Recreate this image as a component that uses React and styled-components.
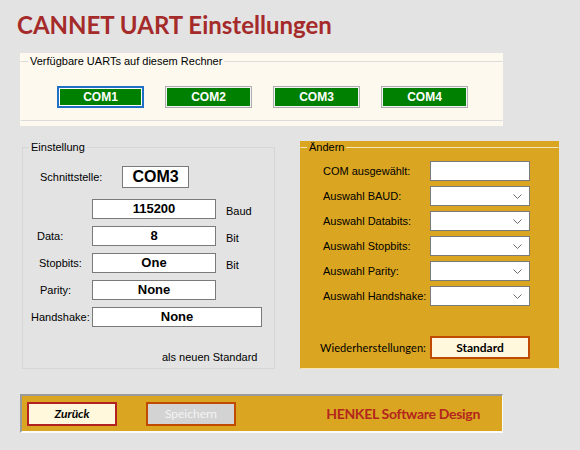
import React from 'react'
import styled, { createGlobalStyle, css } from 'styled-components'

const GlobalStyle = createGlobalStyle`
  html, body {
    margin: 0;
    padding: 0;
    background: #e3e3e3;
  }
  body {
    width: 580px;
    height: 450px;
    overflow: hidden;
    font-family: "Liberation Sans", Arial, sans-serif;
    font-size: 11px;
    color: #000;
  }
`

const Page = styled.div`
  padding: 0 0 0 20px;
  width: 560px;
`

const Title = styled.h1`
  margin: 0 0 0 -3px;
  height: 53px;
  line-height: 50px;
  font-family: Lato, "Open Sans", sans-serif;
  font-size: 24px;
  font-weight: 700;
  color: #a52a2a;
`

/* cream strip with the list of found ports */
const PortPanel = styled.div`
  width: 483px;
  height: 73px;
  padding-top: 2px;
  box-sizing: border-box;
  background: #fdf9ef;
`

const Group = styled.fieldset`
  margin: 0;
  padding: 0;
  min-width: 0;
  border: 1px solid ${p => p.$line || '#d9d9d9'};
  ${p => p.$noSides && css`
    border-left-color: transparent;
    border-right-color: transparent;
  `}
`

const Legend = styled.legend`
  margin-left: ${p => p.$offset || 8}px;
  padding: 0 2px;
  font-size: 11px;
  line-height: 13px;
`

const PortRow = styled.div`
  display: flex;
  gap: 21px;
  padding: 18px 0 0 36px;
  height: 52px;
  box-sizing: border-box;
`

const PortButton = styled.button`
  width: 87px;
  height: 22px;
  padding: 0;
  background: #008000;
  color: #fff;
  font-family: "Liberation Sans", Arial, sans-serif;
  font-size: 12px;
  font-weight: 700;
  border: 1px solid #adadad;
  box-shadow: inset 0 0 0 1px #f2f2f2;
  ${p => p.$focused && css`
    border: 2px solid #1f6fc5;
    box-shadow: inset 0 0 0 1px #fff;
  `}
`

const Middle = styled.div`
  display: flex;
  margin-top: 15px;
  height: 228px;
`

const LeftGroup = styled(Group)`
  margin-left: 2px;
  width: 253px;
  box-sizing: border-box;
  border-color: #d6d6d6;
`

const Rows = styled.div`
  display: flex;
  flex-direction: column;
  gap: 7px;
  margin-top: ${p => p.$top || 0}px;
`

const Row = styled.div`
  display: flex;
  align-items: center;
  height: ${p => p.$h || 20}px;
  margin-top: ${p => p.$top || 0}px;
`

const Label = styled.span`
  box-sizing: border-box;
  width: ${p => p.$w || 69}px;
  padding-left: ${p => p.$indent || 0}px;
  white-space: nowrap;
`

const ValueBox = styled.div`
  box-sizing: border-box;
  width: ${p => p.$w || 124}px;
  height: ${p => p.$h || 20}px;
  background: #fff;
  border: 1px solid #7a7a7a;
  text-align: center;
  font-weight: 700;
  font-size: ${p => p.$size || 13}px;
  line-height: ${p => (p.$h || 20) - 3}px;
`

const Unit = styled.span`
  margin-left: 10px;
  padding-top: 4px;
`

const Note = styled.div`
  margin: 24px 0 0 139px;
`

/* gold panel for changing the settings */
const EditPanel = styled.div`
  margin-left: 25px;
  width: 259px;
  background: #daa520;
`

const EditGroup = styled(Group)`
  height: 228px;
  box-sizing: border-box;
  border-top-color: #f7e6b4;
  border-bottom-color: #f7e6b4;
`

const Fields = styled.div`
  display: flex;
  flex-direction: column;
  gap: 5px;
  margin-top: 7px;
`

const Field = styled.div`
  display: flex;
  align-items: center;
  height: 20px;
`

const FieldLabel = styled.span`
  width: 107px;
  padding-left: 22px;
  white-space: nowrap;
`

const InputBox = styled.div`
  position: relative;
  box-sizing: border-box;
  width: 100px;
  height: 20px;
  background: #fff;
  border: 1px solid #7a7a7a;
`

const Chevron = styled.svg`
  position: absolute;
  right: 7px;
  top: 7px;
`

const RestoreRow = styled.div`
  display: flex;
  align-items: center;
  margin-top: 30px;
`

const RestoreLabel = styled.span`
  width: 110px;
  padding-left: 19px;
  font-family: Lato, "Open Sans", sans-serif;
  font-size: 11px;
  letter-spacing: 0.1px;
  white-space: nowrap;
`

const CalibriButton = styled.button`
  box-sizing: border-box;
  width: ${p => p.$w || 90}px;
  height: ${p => p.$h || 24}px;
  padding: 0;
  font-family: Lato, "Open Sans", sans-serif;
  font-size: 12px;
  font-weight: ${p => (p.$light ? 400 : 700)};
  background: ${p => p.$bg || '#fff8dc'};
  color: ${p => p.$fg || '#000'};
  border: 2px solid ${p => p.$edge || '#c04a00'};
  font-style: ${p => (p.$italic ? 'italic' : 'normal')};
`

const BottomBar = styled.div`
  display: flex;
  align-items: center;
  margin-top: 25px;
  width: 483px;
  height: 39px;
  box-sizing: border-box;
  padding-left: 5px;
  gap: 29px;
  background: #daa520;
  border-top: 2px solid #9a9a9a;
  border-left: 2px solid #9a9a9a;
  border-bottom: 2px solid #fbfbfb;
  border-right: 1px solid #fbfbfb;
`

const Brand = styled.span`
  margin-left: auto;
  margin-right: 22px;
  font-family: Lato, "Open Sans", sans-serif;
  font-size: 14px;
  letter-spacing: -0.3px;
  font-weight: 700;
  color: #b3261e;
`

const ports = ['COM1', 'COM2', 'COM3', 'COM4']

const settings = [
  { label: 'Data:', indent: 14, value: '8', unit: 'Bit' },
  { label: 'Stopbits:', indent: 16, value: 'One', unit: 'Bit' },
  { label: 'Parity:', indent: 17, value: 'None' },
]

const choices = ['Auswahl BAUD:', 'Auswahl Databits:', 'Auswahl Stopbits:', 'Auswahl Parity:', 'Auswahl Handshake:']

const Combo = () => (
  <InputBox>
    <Chevron width="9" height="5" viewBox="0 0 9 5">
      <path d="M0.5 0.5 L4.5 4.5 L8.5 0.5" fill="none" stroke="#6d6d6d" strokeWidth="1" />
    </Chevron>
  </InputBox>
)

export default function App() {
  return (
    <>
      <GlobalStyle />
      <Page>
        <Title>CANNET UART Einstellungen</Title>

        <PortPanel>
          <Group $noSides $line="#dcdcdc">
            <Legend $offset={7}>Verfügbare UARTs auf diesem Rechner</Legend>
            <PortRow>
              {ports.map((p, i) => (
                <PortButton key={p} $focused={i === 0}>{p}</PortButton>
              ))}
            </PortRow>
          </Group>
        </PortPanel>

        <Middle>
          <LeftGroup>
            <Legend $offset={6}>Einstellung</Legend>
            <Row $h={22} $top={12}>
              <Label $w={99} $indent={17}>Schnittstelle:</Label>
              <ValueBox $w={67} $h={22} $size={16}>COM3</ValueBox>
            </Row>
            <Rows $top={11}>
              <Row>
                <Label />
                <ValueBox>115200</ValueBox>
                <Unit>Baud</Unit>
              </Row>
              {settings.map(s => (
                <Row key={s.label}>
                  <Label $indent={s.indent}>{s.label}</Label>
                  <ValueBox>{s.value}</ValueBox>
                  {s.unit && <Unit>{s.unit}</Unit>}
                </Row>
              ))}
              <Row>
                <Label $indent={8}>Handshake:</Label>
                <ValueBox $w={170}>None</ValueBox>
              </Row>
            </Rows>
            <Note>als neuen Standard</Note>
          </LeftGroup>

          <EditPanel>
            <EditGroup $noSides>
              <Legend $offset={6}>Ändern</Legend>
              <Fields>
                <Field>
                  <FieldLabel>COM ausgewählt:</FieldLabel>
                  <InputBox />
                </Field>
                {choices.map(c => (
                  <Field key={c}>
                    <FieldLabel>{c}</FieldLabel>
                    <Combo />
                  </Field>
                ))}
              </Fields>
              <RestoreRow>
                <RestoreLabel>Wiederherstellungen:</RestoreLabel>
                <CalibriButton $w={100} $h={23}>Standard</CalibriButton>
              </RestoreRow>
            </EditGroup>
          </EditPanel>
        </Middle>

        <BottomBar>
          <CalibriButton $edge="#b22222" $italic>Zurück</CalibriButton>
          <CalibriButton $bg="#d3d3d3" $fg="#f4f4f4" $light>Speichern</CalibriButton>
          <Brand>HENKEL Software Design</Brand>
        </BottomBar>
      </Page>
    </>
  )
}
